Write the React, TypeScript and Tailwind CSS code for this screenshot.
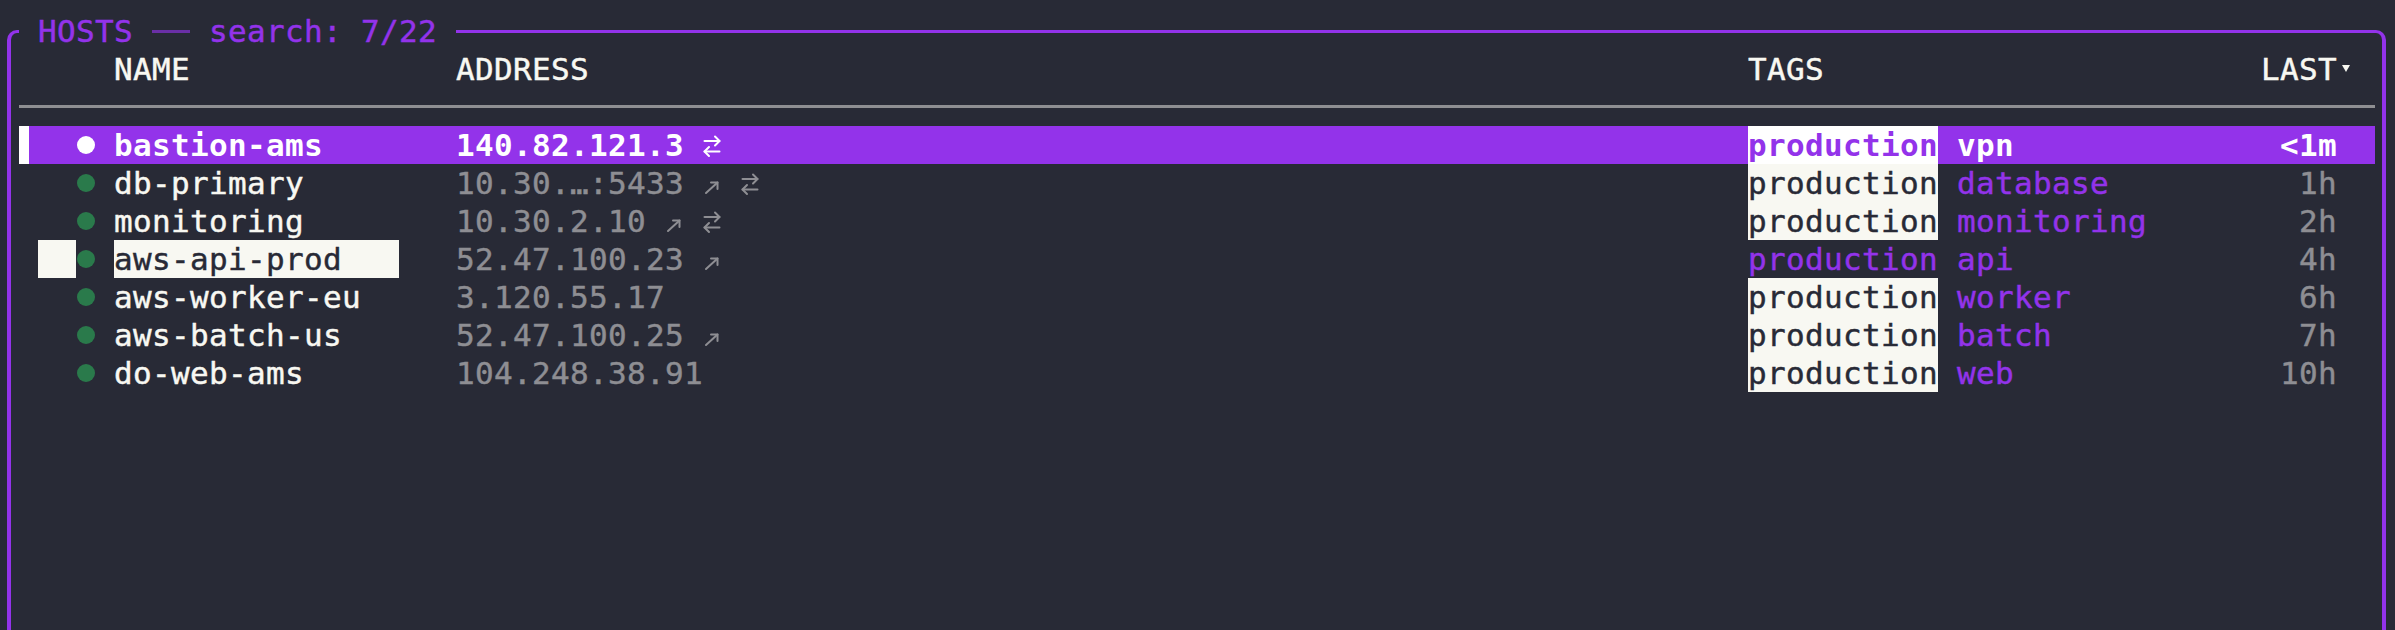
import React from "react";

type Icon = "out" | "swap";
type Row = {
  name: string;
  addr: string;
  icons: Icon[];
  tag: string;
  last: string;
  selected?: boolean;
  marked?: boolean;
  plainTag?: boolean;
};

const rows: Row[] = [
  { name: "bastion-ams", addr: "140.82.121.3", icons: ["swap"], tag: "vpn", last: "<1m", selected: true },
  { name: "db-primary", addr: "10.30.…:5433", icons: ["out", "swap"], tag: "database", last: "1h" },
  { name: "monitoring", addr: "10.30.2.10", icons: ["out", "swap"], tag: "monitoring", last: "2h" },
  { name: "aws-api-prod", addr: "52.47.100.23", icons: ["out"], tag: "api", last: "4h", marked: true, plainTag: true },
  { name: "aws-worker-eu", addr: "3.120.55.17", icons: [], tag: "worker", last: "6h" },
  { name: "aws-batch-us", addr: "52.47.100.25", icons: ["out"], tag: "batch", last: "7h" },
  { name: "do-web-ams", addr: "104.248.38.91", icons: [], tag: "web", last: "10h" },
];

function OutIcon({ color }: { color: string }) {
  return (
    <svg width="19" height="38" viewBox="0 0 19 38" className="block shrink-0">
      <g stroke={color} strokeWidth="2" fill="none" strokeLinecap="round" strokeLinejoin="round">
        <path d="M3 29 L14.5 18.5" />
        <path d="M8 18.5 L14.5 18.5 L14.5 25" />
      </g>
    </svg>
  );
}

function SwapIcon({ color }: { color: string }) {
  return (
    <svg width="19" height="38" viewBox="0 0 19 38" className="block shrink-0">
      <g stroke={color} strokeWidth="2" fill="none" strokeLinecap="round" strokeLinejoin="round">
        <path d="M1.5 15 L16.5 15" />
        <path d="M12 10.5 L16.5 15 L12 19.5" />
        <path d="M16.5 25.5 L1.5 25.5" />
        <path d="M6 21 L1.5 25.5 L6 30" />
      </g>
    </svg>
  );
}

const heavy = "[-webkit-text-stroke:0.45px_currentcolor]";

function DataRow({ r }: { r: Row }) {
  const sel = !!r.selected;
  const iconColor = sel ? "#ffffff" : "#8e8e93";
  return (
    <div className={`flex h-[38px] shrink-0 ${sel ? "bg-[#9333ea]" : ""}`}>
      {/* cursor col 1 */}
      <div className="w-[19px] h-full flex shrink-0">
        {sel && <div className="w-[10px] h-full bg-white" />}
      </div>
      {/* mark cols 2-3 */}
      <div className={`w-[38px] h-full shrink-0 ${r.marked ? "bg-[#f8f8f2]" : ""}`} />
      {/* dot col 4 */}
      <div className="w-[19px] h-full flex items-center justify-center shrink-0">
        <div className={`w-[18px] h-[18px] rounded-full shrink-0 ${sel ? "bg-white" : "bg-[#2a7a4b]"}`} />
      </div>
      <div className="w-[19px] shrink-0" />
      {/* name cols 6-20 */}
      <div
        className={`w-[285px] h-full whitespace-pre shrink-0 ${
          r.marked
            ? `bg-[#f8f8f2] text-[#282a36] ${heavy}`
            : sel
            ? "text-white font-bold"
            : `text-[#f8f8f2] ${heavy}`
        }`}
      >
        {r.name}
      </div>
      <div className="w-[57px] shrink-0" />
      {/* address cols 24-91 */}
      <div className="w-[1292px] h-full flex shrink-0">
        <span className={`whitespace-pre shrink-0 ${sel ? "text-white font-bold" : `text-[#8e8e93] ${heavy}`}`}>
          {r.addr}
        </span>
        {r.icons.map((ic, i) => (
          <div key={i} className="flex shrink-0">
            <div className="w-[19px] shrink-0" />
            {ic === "out" ? <OutIcon color={iconColor} /> : <SwapIcon color={iconColor} />}
          </div>
        ))}
      </div>
      {/* tags cols 92-111 */}
      <div className="w-[380px] h-full flex shrink-0 overflow-visible">
        <span
          className={`whitespace-pre shrink-0 ${
            sel
              ? "bg-white text-[#9333ea] font-bold"
              : r.plainTag
              ? `text-[#9333ea] ${heavy}`
              : `bg-[#f8f8f2] text-[#282a36] ${heavy}`
          }`}
        >
          production
        </span>
        <div className="w-[19px] shrink-0" />
        <span className={`whitespace-pre shrink-0 ${sel ? "text-white font-bold" : `text-[#9333ea] ${heavy}`}`}>
          {r.tag}
        </span>
      </div>
      {/* last cols 112-122 */}
      <div
        className={`w-[209px] h-full text-right whitespace-pre shrink-0 ${
          sel ? "text-white font-bold" : `text-[#8e8e93] ${heavy}`
        }`}
      >
        {r.last}
      </div>
      <div className="w-[38px] shrink-0" />
    </div>
  );
}

export default function App() {
  return (
    <div className="w-[2395px] h-[630px] bg-[#282a36] pt-[12px] overflow-hidden flex flex-col font-['DejaVu_Sans_Mono','Liberation_Mono',monospace] text-[31px] tracking-[0.34px] leading-[38px]">
      {/* title row */}
      <div className="flex h-[38px] shrink-0 items-start">
        <div className="w-[19px] h-full shrink-0">
          <div className="ml-[7px] mt-[18px] w-[12px] h-[20px] border-l-4 border-t-[3px] border-[#9333ea] rounded-tl-[10px]" />
        </div>
        <div className="w-[19px] shrink-0" />
        <span className={`w-[95px] shrink-0 text-[#9333ea] whitespace-pre ${heavy}`}>HOSTS</span>
        <div className="w-[19px] shrink-0" />
        <div className="w-[38px] h-[3px] mt-[18px] bg-[#6a2fa6] shrink-0" />
        <div className="w-[19px] shrink-0" />
        <span className={`w-[228px] shrink-0 text-[#9333ea] whitespace-pre ${heavy}`}>search: 7/22</span>
        <div className="w-[19px] shrink-0" />
        <div className="flex-1 h-[3px] mt-[18px] bg-[#9333ea]" />
        <div className="w-[11px] h-[20px] mt-[18px] border-r-4 border-t-[3px] border-[#9333ea] rounded-tr-[10px] shrink-0" />
        <div className="w-[9px] shrink-0" />
      </div>

      {/* body */}
      <div className="flex-1 ml-[7px] mr-[9px] pl-[8px] pr-[7px] border-l-4 border-r-4 border-[#9333ea] flex flex-col">
        {/* header */}
        <div className={`flex h-[38px] shrink-0 text-[#f8f8f2] ${heavy}`}>
          <div className="w-[95px] shrink-0" />
          <span className="w-[342px] whitespace-pre shrink-0">NAME</span>
          <span className="w-[1292px] whitespace-pre shrink-0">ADDRESS</span>
          <span className="w-[380px] whitespace-pre shrink-0">TAGS</span>
          <span className="w-[209px] text-right whitespace-pre shrink-0">LAST</span>
          <div className="w-[19px] h-full shrink-0">
            <svg width="19" height="38" viewBox="0 0 19 38" className="block">
              <path d="M5 15 L13 15 L9 22 Z" fill="#f8f8f2" />
            </svg>
          </div>
          <div className="w-[19px] shrink-0" />
        </div>
        {/* separator */}
        <div className="h-[38px] shrink-0">
          <div className="mt-[17px] h-[3px] bg-[#8e8e92]" />
        </div>
        {rows.map((r) => (
          <DataRow key={r.name} r={r} />
        ))}
      </div>
    </div>
  );
}
